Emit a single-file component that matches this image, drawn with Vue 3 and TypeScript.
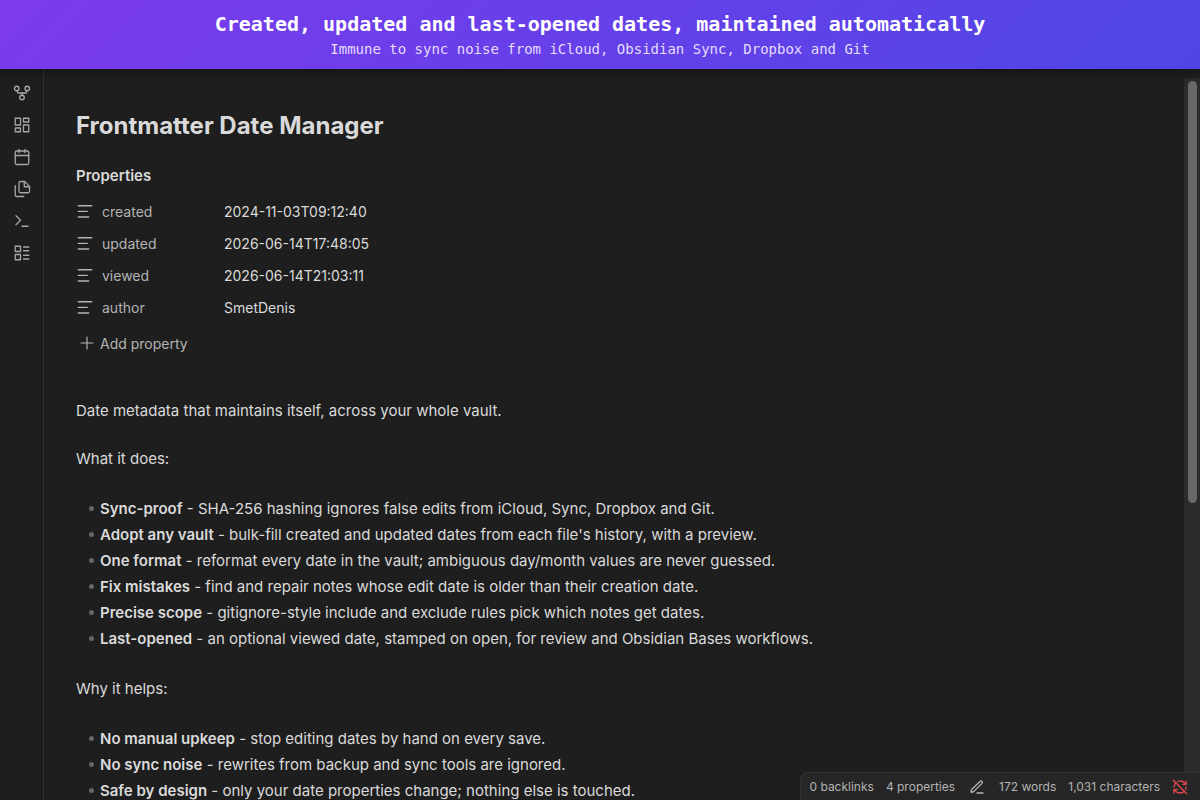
<script setup lang="ts">
interface RibbonItem {
  label: string
  icon: string[]
}

interface Property {
  name: string
  value: string
}

interface Point {
  term: string
  text: string
}

const ribbon: RibbonItem[] = [
  {
    label: 'Open graph view',
    icon: [
      'M15 18a3 3 0 1 1-6 0a3 3 0 0 1 6 0z',
      'M8 6a3 3 0 1 1-6 0a3 3 0 0 1 6 0z',
      'M22 6a3 3 0 1 1-6 0a3 3 0 0 1 6 0z',
      'M18 9v2c0 .6-.4 1-1 1H7c-.6 0-1-.4-1-1V9',
      'M12 12v3',
    ],
  },
  {
    label: 'Create new canvas',
    icon: ['M3 3h7v9H3z', 'M14 3h7v5h-7z', 'M14 12h7v9h-7z', 'M3 16h7v5H3z'],
  },
  {
    label: "Open today's daily note",
    icon: ['M8 2v4', 'M16 2v4', 'M5 4h14a2 2 0 0 1 2 2v14a2 2 0 0 1-2 2H5a2 2 0 0 1-2-2V6a2 2 0 0 1 2-2z', 'M3 10h18'],
  },
  {
    label: 'Insert template',
    icon: [
      'M15.5 2H10a2 2 0 0 0-2 2v11a2 2 0 0 0 2 2h10a2 2 0 0 0 2-2V8.500z',
      'M15 2v7h7',
      'M3 7.600v12.800c0 .4.2.8.5 1.100.3.3.7.5 1.100.5h9.800',
    ],
  },
  { label: 'Open command palette', icon: ['m4 17 6-6-6-6', 'M12 19h8'] },
  {
    label: 'Create new base',
    icon: ['M3 3h7v7H3z', 'M3 14h7v7H3z', 'M14 4h7', 'M14 9h7', 'M14 15h7', 'M14 20h7'],
  },
]

const properties: Property[] = [
  { name: 'created', value: '2024-11-03T09:12:40' },
  { name: 'updated', value: '2026-06-14T17:48:05' },
  { name: 'viewed', value: '2026-06-14T21:03:11' },
  { name: 'author', value: 'SmetDenis' },
]

const features: Point[] = [
  { term: 'Sync-proof', text: 'SHA-256 hashing ignores false edits from iCloud, Sync, Dropbox and Git.' },
  { term: 'Adopt any vault', text: "bulk-fill created and updated dates from each file's history, with a preview." },
  { term: 'One format', text: 'reformat every date in the vault; ambiguous day/month values are never guessed.' },
  { term: 'Fix mistakes', text: 'find and repair notes whose edit date is older than their creation date.' },
  { term: 'Precise scope', text: 'gitignore-style include and exclude rules pick which notes get dates.' },
  { term: 'Last-opened', text: 'an optional viewed date, stamped on open, for review and Obsidian Bases workflows.' },
]

const benefits: Point[] = [
  { term: 'No manual upkeep', text: 'stop editing dates by hand on every save.' },
  { term: 'No sync noise', text: 'rewrites from backup and sync tools are ignored.' },
  { term: 'Safe by design', text: 'only your date properties change; nothing else is touched.' },
]
</script>

<template>
  <div class="app">
    <header class="banner">
      <p class="banner-title">Created, updated and last-opened dates, maintained automatically</p>
      <p class="banner-sub">Immune to sync noise from iCloud, Obsidian Sync, Dropbox and Git</p>
    </header>

    <div class="workspace">
      <nav class="ribbon" aria-label="Ribbon">
        <button v-for="item in ribbon" :key="item.label" type="button" class="ribbon-button" :aria-label="item.label">
          <svg class="icon" viewBox="0 0 24 24" aria-hidden="true">
            <path v-for="d in item.icon" :key="d" :d="d" />
          </svg>
        </button>
      </nav>

      <main class="note">
        <h1 class="title">Frontmatter Date Manager</h1>

        <section class="properties">
          <h2 class="properties-heading">Properties</h2>
          <dl class="property-list">
            <div v-for="p in properties" :key="p.name" class="property">
              <dt class="property-key">
                <svg class="icon property-icon" viewBox="0 0 24 24" aria-hidden="true">
                  <path d="M3 5h18M3 12.500h12M3 20h14" />
                </svg>
                {{ p.name }}
              </dt>
              <dd class="property-value">{{ p.value }}</dd>
            </div>
          </dl>
          <button type="button" class="add-property">
            <svg class="icon" viewBox="0 0 24 24" aria-hidden="true"><path d="M3 12h18M12 3v18" /></svg>
            Add property
          </button>
        </section>

        <p class="paragraph">Date metadata that maintains itself, across your whole vault.</p>
        <p class="paragraph">What it does:</p>
        <ul class="points">
          <li v-for="f in features" :key="f.term"><strong>{{ f.term }}</strong> - {{ f.text }}</li>
        </ul>
        <p class="paragraph">Why it helps:</p>
        <ul class="points">
          <li v-for="b in benefits" :key="b.term"><strong>{{ b.term }}</strong> - {{ b.text }}</li>
        </ul>
      </main>

      <div class="scroll-track" aria-hidden="true"><div class="scroll-thumb"></div></div>

      <footer class="status">
        <span>0 backlinks</span>
        <span>4 properties</span>
        <button type="button" class="status-button edit" aria-label="Editing view">
          <svg class="icon" viewBox="0 0 24 24" aria-hidden="true">
            <path d="M12 21h9" />
            <path d="M16.400 3.600a2.100 2.100 0 0 1 3 3L7.400 18.600a2 2 0 0 1-.9.500l-2.900.8a.5.5 0 0 1-.6-.6l.8-2.900a2 2 0 0 1 .5-.9z" />
          </svg>
        </button>
        <span>172 words</span>
        <span>1,031 characters</span>
        <button type="button" class="status-button sync" aria-label="Sync is off">
          <svg class="icon" viewBox="0 0 24 24" aria-hidden="true">
            <path d="M21 8 18.700 5.700A9 9 0 0 0 12 3c-1.200 0-2.300.200-3.400.600" />
            <path d="M21 3v5h-5" />
            <path d="M3 12c0-2.500 1-4.700 2.600-6.400" />
            <path d="M3 16l2.300 2.300A9 9 0 0 0 12 21c2.500 0 4.700-1 6.400-2.600" />
            <path d="M3 21v-5h5" />
            <path d="M21 12c0 1.200-.200 2.300-.600 3.400" />
            <path d="M2 2l20 20" />
          </svg>
        </button>
      </footer>
    </div>
  </div>
</template>

<style>
body {
  background: #1e1e1e;
}
</style>

<style scoped>
.app {
  display: flex;
  flex-direction: column;
  height: 100vh;
  overflow: hidden;
  background: #1e1e1e;
  color: #dadada;
  font-family: Inter, "Liberation Sans", sans-serif;
  font-size: 15px;
}

.app * {
  box-sizing: border-box;
}

h1,
h2,
p,
ul,
dl,
dd {
  margin: 0;
  padding: 0;
}

button {
  border: 0;
  padding: 0;
  background: none;
  color: inherit;
  font: inherit;
  cursor: pointer;
}

.icon {
  display: block;
  width: 18px;
  height: 18px;
  flex: none;
  fill: none;
  stroke: currentColor;
  stroke-width: 2;
  stroke-linecap: round;
  stroke-linejoin: round;
}

.banner {
  flex: none;
  padding: 10px 16px;
  background: linear-gradient(135deg, #7c3aed, #4f46e5);
  box-shadow: 0 2px 12px rgba(0, 0, 0, 0.4);
  color: #fff;
  font-family: "DejaVu Sans Mono", "Liberation Mono", monospace;
  text-align: center;
  z-index: 1;
}

.banner-title {
  font-size: 20px;
  font-weight: 700;
  line-height: 29px;
}

.banner-sub {
  color: #e5dbfc;
  font-size: 14px;
  line-height: 20px;
}

.workspace {
  position: relative;
  display: flex;
  flex: 1;
  min-height: 0;
}

.ribbon {
  display: flex;
  flex: none;
  flex-direction: column;
  align-items: center;
  gap: 4px;
  width: 44px;
  padding-top: 10px;
  border-right: 1px solid #323232;
}

.ribbon-button {
  display: grid;
  place-items: center;
  width: 28px;
  height: 28px;
  color: #a6a6a6;
}

.ribbon-button .icon {
  stroke-width: 1.75;
}

.note {
  flex: 1;
  min-width: 0;
  padding: 40px 48px 0 32px;
  overflow: hidden;
}

.title {
  font-size: 24px;
  font-weight: 700;
  line-height: 34px;
}

.properties {
  margin-top: 20px;
}

.properties-heading {
  font-size: 15px;
  font-weight: 600;
  line-height: 26px;
}

.property-list {
  margin-top: 6px;
}

.property {
  display: flex;
  align-items: center;
  height: 32px;
  font-size: 14px;
}

.property-key {
  display: flex;
  align-items: center;
  gap: 8px;
  width: 148px;
  color: #b3b3b3;
}

.property-icon {
  stroke-width: 1.75;
}

.add-property {
  display: flex;
  align-items: center;
  gap: 5px;
  height: 28px;
  margin: 6px 0 41px 3px;
  color: #b3b3b3;
  font-size: 14px;
}

.add-property .icon {
  width: 16px;
  height: 16px;
  stroke-width: 1.75;
}

.paragraph {
  margin-bottom: 22px;
  line-height: 26px;
}

.points {
  margin-bottom: 24px;
  padding: 2px 0 0 24px;
  line-height: 26px;
  list-style: none;
}

.points li {
  position: relative;
}

.points li::before {
  content: "";
  position: absolute;
  top: 10px;
  left: -11px;
  width: 5px;
  height: 5px;
  border-radius: 50%;
  background: #666;
}

.points strong {
  font-weight: 600;
}

.scroll-track {
  position: absolute;
  top: 9px;
  right: 0;
  bottom: 0;
  width: 16px;
  padding: 3px;
  background: #2b2b2b;
}

.scroll-thumb {
  width: 9px;
  height: 59%;
  margin-left: 1px;
  border-radius: 5px;
  background: #686868;
}

.status {
  position: absolute;
  right: 0;
  bottom: 0;
  display: flex;
  align-items: center;
  gap: 12px;
  height: 28px;
  padding: 0 12px 0 8px;
  border: 1px solid #323232;
  border-width: 1px 0 0 1px;
  border-radius: 8px 0 0 0;
  background: #262626;
  color: #b3b3b3;
  font-size: 12px;
}

.status-button .icon {
  width: 16px;
  height: 16px;
}

.edit {
  padding: 0 2px;
}

.sync {
  color: #e5484f;
}
</style>
